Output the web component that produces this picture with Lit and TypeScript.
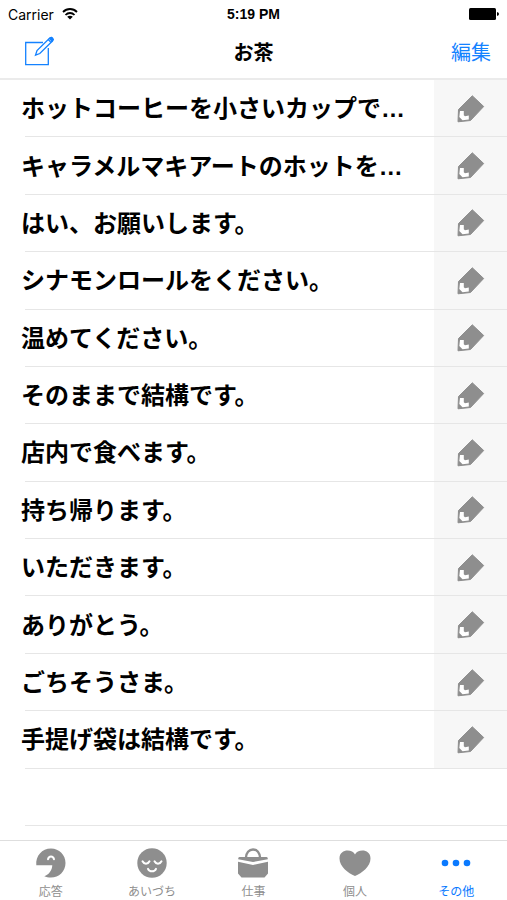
import { LitElement, html, svg, css } from "lit";
import { customElement, state } from "lit/decorators.js";

const phrases = [
  "ホットコーヒーを小さいカップで…",
  "キャラメルマキアートのホットを…",
  "はい、お願いします。",
  "シナモンロールをください。",
  "温めてください。",
  "そのままで結構です。",
  "店内で食べます。",
  "持ち帰ります。",
  "いただきます。",
  "ありがとう。",
  "ごちそうさま。",
  "手提げ袋は結構です。",
];

const tabs = [
  {
    label: "応答",
    icon: svg`
      <path fill="currentColor" d="M0.3 17.2C-0.6 8 6 0.5 15 0.5C23.300 0.500 29.500 7 29.500 15C29.500 23.500 23 29.500 15 29.500C12.500 29.500 10 29 8.300 28.200C13 26.500 16 22.500 16.300 17.200Z"/>
      <path class="cut" d="M12 11.300C12.800 7.600 17.200 7.600 18 11.300"/>`,
  },
  {
    label: "あいづち",
    icon: svg`
      <circle cx="15" cy="15" r="14.700" fill="currentColor"/>
      <path class="cut" d="M5.500 13.300C7 16.400 11 16.400 12.500 13.300M17.500 13.300C19 16.400 23 16.400 24.500 13.300M11 20.800C12.500 24.200 17.500 24.200 19 20.800"/>`,
  },
  {
    label: "仕事",
    icon: svg`
      <path fill="none" stroke="currentColor" stroke-width="2.400" d="M7.800 10.500C7.800 -1.600 22.200 -1.600 22.200 10.500"/>
      <path fill="currentColor" d="M1.500 9H28.500Q30 9.200 29.800 11.200L15 14L0.200 11.200Q0 9.200 1.500 9Z"/>
      <path fill="currentColor" d="M0 13.700L15 16.900L30 13.700V25.500L26.500 29.500H3.500L0 25.500Z"/>`,
  },
  {
    label: "個人",
    icon: svg`<path fill="currentColor" d="M15 6.500C12.500 0.800 -0.500 0.500 -0.500 10.500C-0.500 18.500 8 25 15 28C22 25 30.500 18.500 30.500 10.500C30.500 0.500 17.500 0.800 15 6.500Z"/>`,
  },
  {
    label: "その他",
    icon: svg`
      <circle cx="4" cy="15" r="3.300" fill="currentColor"/>
      <circle cx="15" cy="15" r="3.300" fill="currentColor"/>
      <circle cx="26" cy="15" r="3.300" fill="currentColor"/>`,
  },
];

@customElement("app-root")
export class AppRoot extends LitElement {
  @state() private current = 4;

  static styles = css`
    :host {
      display: flex;
      flex-direction: column;
      min-height: 100vh;
      background: #fff;
      color: #000;
      font-family: "Liberation Sans", "Noto Sans CJK JP", sans-serif;
    }
    * {
      box-sizing: border-box;
    }
    button {
      margin: 0;
      padding: 0;
      border: 0;
      background: none;
      color: inherit;
      font: inherit;
      cursor: pointer;
    }
    svg {
      display: block;
      overflow: visible;
    }
    .bar {
      display: grid;
      grid-template-columns: 1fr auto 1fr;
      align-items: center;
    }
    .status {
      height: 28px;
      padding: 0 8px;
      font-size: 14px;
    }
    .carrier {
      display: flex;
      align-items: center;
      gap: 8px;
      font-family: Inter, sans-serif;
    }
    .time {
      font-weight: 700;
    }
    .end {
      justify-self: end;
    }
    .nav {
      height: 52px;
      padding: 0 16px;
      border-bottom: 2px solid #ebebeb;
      font-size: 20px;
      line-height: 28px;
    }
    .title {
      margin: 0;
      font-size: 20px;
      font-weight: 700;
    }
    .blue {
      color: #1482ff;
    }
    .compose {
      justify-self: start;
      padding: 0 8px 4px;
    }
    .list {
      flex: 1;
      display: grid;
      grid-auto-rows: 1fr;
      margin: 0;
      padding: 0 0 14px;
      list-style: none;
    }
    .row {
      position: relative;
      display: flex;
      min-height: 48px;
    }
    .row::after {
      content: "";
      position: absolute;
      inset: auto 0 0 25px;
      height: 1px;
      background: #e6e6e6;
    }
    .phrase {
      flex: 1;
      min-width: 0;
      padding: 0 0 4px 21px;
      overflow: hidden;
      text-align: left;
      white-space: nowrap;
      font-size: 24px;
      font-weight: 700;
    }
    .edit {
      width: 73px;
      display: grid;
      place-items: center;
      background: #f7f7f7;
      color: #8e8e8e;
    }
    .tabs {
      display: grid;
      grid-template-columns: repeat(5, 1fr);
      height: 60px;
      border-top: 1px solid #dedede;
    }
    .tab {
      display: flex;
      flex-direction: column;
      align-items: center;
      gap: 5px;
      padding-top: 7px;
      color: #8e8e8e;
      font-size: 12px;
      line-height: 18px;
    }
    .tab.active {
      color: #0a7aff;
    }
    .cut {
      fill: none;
      stroke: #fff;
      stroke-width: 2;
      stroke-linecap: round;
    }
  `;

  render() {
    return html`
      <div class="bar status">
        <span class="carrier">
          Carrier
          <svg width="16" height="12" viewBox="0 0 16 12" fill="none" stroke="#000" stroke-width="1.800">
            <path d="M1 4C5 0 11 0 15 4M3.500 7C6 4.300 10 4.300 12.500 7" />
            <path fill="#000" stroke="none" d="M8 11.500L5.200 8.800C6.700 7.400 9.300 7.400 10.800 8.800Z" />
          </svg>
        </span>
        <span class="time">5:19 PM</span>
        <svg class="end" width="30" height="12" viewBox="0 0 30 12">
          <rect width="27" height="12" rx="1.500" />
          <path d="M28 4Q30 4.500 30 6T28 8Z" />
        </svg>
      </div>
      <header class="bar nav">
        <button class="compose blue" aria-label="新規作成">
          <svg width="30" height="30" viewBox="0 0 30 30" fill="none" stroke="currentColor" stroke-width="1.300">
            <path d="M19 6.500H1.700V28.700H24.300V12" />
            <path d="M11.500 19.200L13 14.500L26 1.800Q27.500 1 28.600 2.200Q29.700 3.500 28.700 4.700L15.800 17.500Z" />
            <path d="M24.200 3.500L27 6.400" />
            <path fill="currentColor" d="M25.500 2.500L27.500 1.500L29.200 3.500L28 5.200Z" />
          </svg>
        </button>
        <h1 class="title">お茶</h1>
        <button class="end blue">編集</button>
      </header>
      <ul class="list">
        ${phrases.map(
          (text) => html`
            <li class="row">
              <button class="phrase">${text}</button>
              <button class="edit" aria-label="${text}を編集">
                <svg width="28" height="28" viewBox="0 0 28 28">
                  <path fill="currentColor" stroke="currentColor" stroke-linejoin="round" d="M1 26.800L1.500 14.500L15.300 0.800L26.700 11.500L13.500 25.500Z" />
                  <path fill="#fff" d="M3 16H6.800V20.300L8 21.200L11.800 20.500V24.500L5.500 25.300L2.300 22Z" />
                </svg>
              </button>
            </li>
          `,
        )}
        <li class="row"></li>
      </ul>
      <nav class="tabs">
        ${tabs.map(
          (tab, i) => html`
            <button
              class="tab ${i === this.current ? "active" : ""}"
              aria-current=${i === this.current ? "page" : "false"}
              @click=${() => (this.current = i)}
            >
              <svg width="30" height="30" viewBox="0 0 30 30">${tab.icon}</svg>
              <span>${tab.label}</span>
            </button>
          `,
        )}
      </nav>
    `;
  }
}
